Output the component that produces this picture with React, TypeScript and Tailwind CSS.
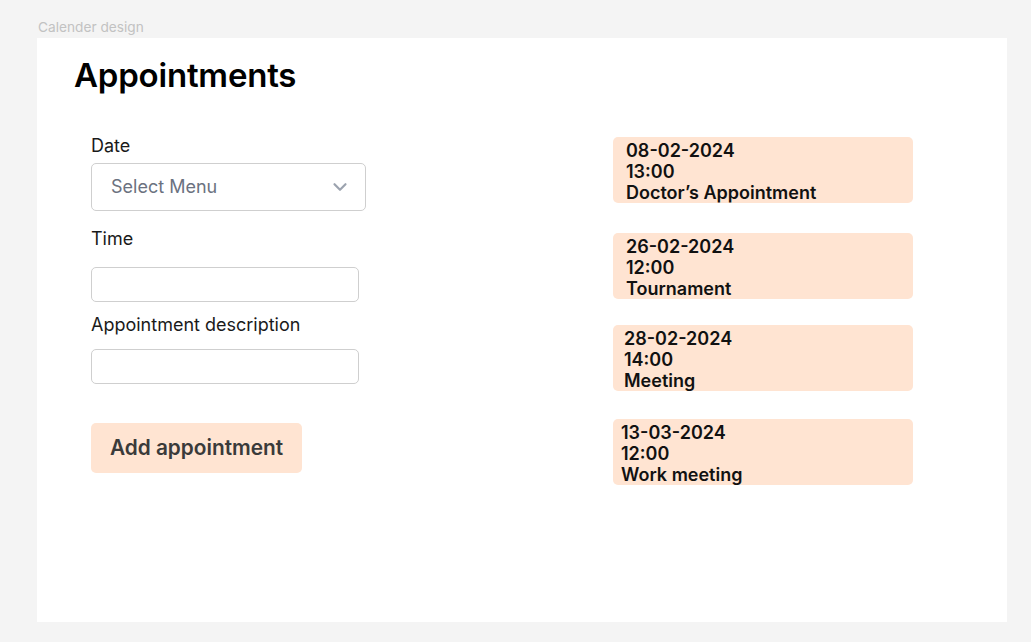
import { ChevronDown } from "lucide-react";

type Appointment = {
  date: string;
  time: string;
  desc: string;
  mt: string;
  pl: string;
};

const appointments: Appointment[] = [
  { date: "08-02-2024", time: "13:00", desc: "Doctor’s Appointment", mt: "mt-0", pl: "pl-[13px]" },
  { date: "26-02-2024", time: "12:00", desc: "Tournament", mt: "mt-[30px]", pl: "pl-[13px]" },
  { date: "28-02-2024", time: "14:00", desc: "Meeting", mt: "mt-[26px]", pl: "pl-[11px]" },
  { date: "13-03-2024", time: "12:00", desc: "Work meeting", mt: "mt-[28px]", pl: "pl-[8px]" },
];

export default function App() {
  return (
    <div className="h-[642px] w-full bg-[#f4f4f4] font-['Inter',sans-serif] overflow-hidden">
      <div className="pl-[38px] pt-[18px] text-[13.7px] leading-[18px] text-[#c2c2c2]">Calender design</div>
      <div className="ml-[37px] mt-[2px] h-[584px] w-[970px] bg-white">
        <h1 className="pl-[37px] pt-[17px] text-[33px] leading-[40px] font-semibold text-black tracking-[-0.2px]">
          Appointments
        </h1>

        <div className="flex mt-[36px]">
          {/* form */}
          <div className="ml-[54px] mt-[3px] w-[275px] text-[18px] leading-[24px] text-[#1a1a1a]">
            <label className="block">Date</label>
            <div className="mt-[5px] flex h-[48px] w-[275px] items-center justify-between rounded-[5px] border border-[#cfcfcf] pl-[19px] pr-[14px]">
              <span className="text-[#6b7280]">Select Menu</span>
              <ChevronDown size={22} strokeWidth={2.4} className="text-[#9ca3af]" />
            </div>
            <label className="mt-[16px] block">Time</label>
            <input className="mt-[16px] block h-[35px] w-[268px] rounded-[5px] border border-[#cfcfcf]" />
            <label className="mt-[11px] block">Appointment description</label>
            <input className="mt-[12px] block h-[35px] w-[268px] rounded-[5px] border border-[#cfcfcf]" />
            <button className="mt-[39px] flex h-[50px] w-[211px] items-center justify-center rounded-[5px] bg-[#ffe4d2] text-[20.8px] font-semibold text-[#3a3a3a]">
              Add appointment
            </button>
          </div>

          {/* list */}
          <div className="ml-[247px] mt-[6px] w-[300px]">
            {appointments.map((a) => (
              <div
                key={a.date}
                className={`${a.mt} ${a.pl} h-[66px] rounded-[5px] bg-[#ffe4d2] pt-[3px] text-[18px] leading-[21px] font-semibold text-[#111]`}
              >
                <div>{a.date}</div>
                <div>{a.time}</div>
                <div>{a.desc}</div>
              </div>
            ))}
          </div>
        </div>
      </div>
    </div>
  );
}
